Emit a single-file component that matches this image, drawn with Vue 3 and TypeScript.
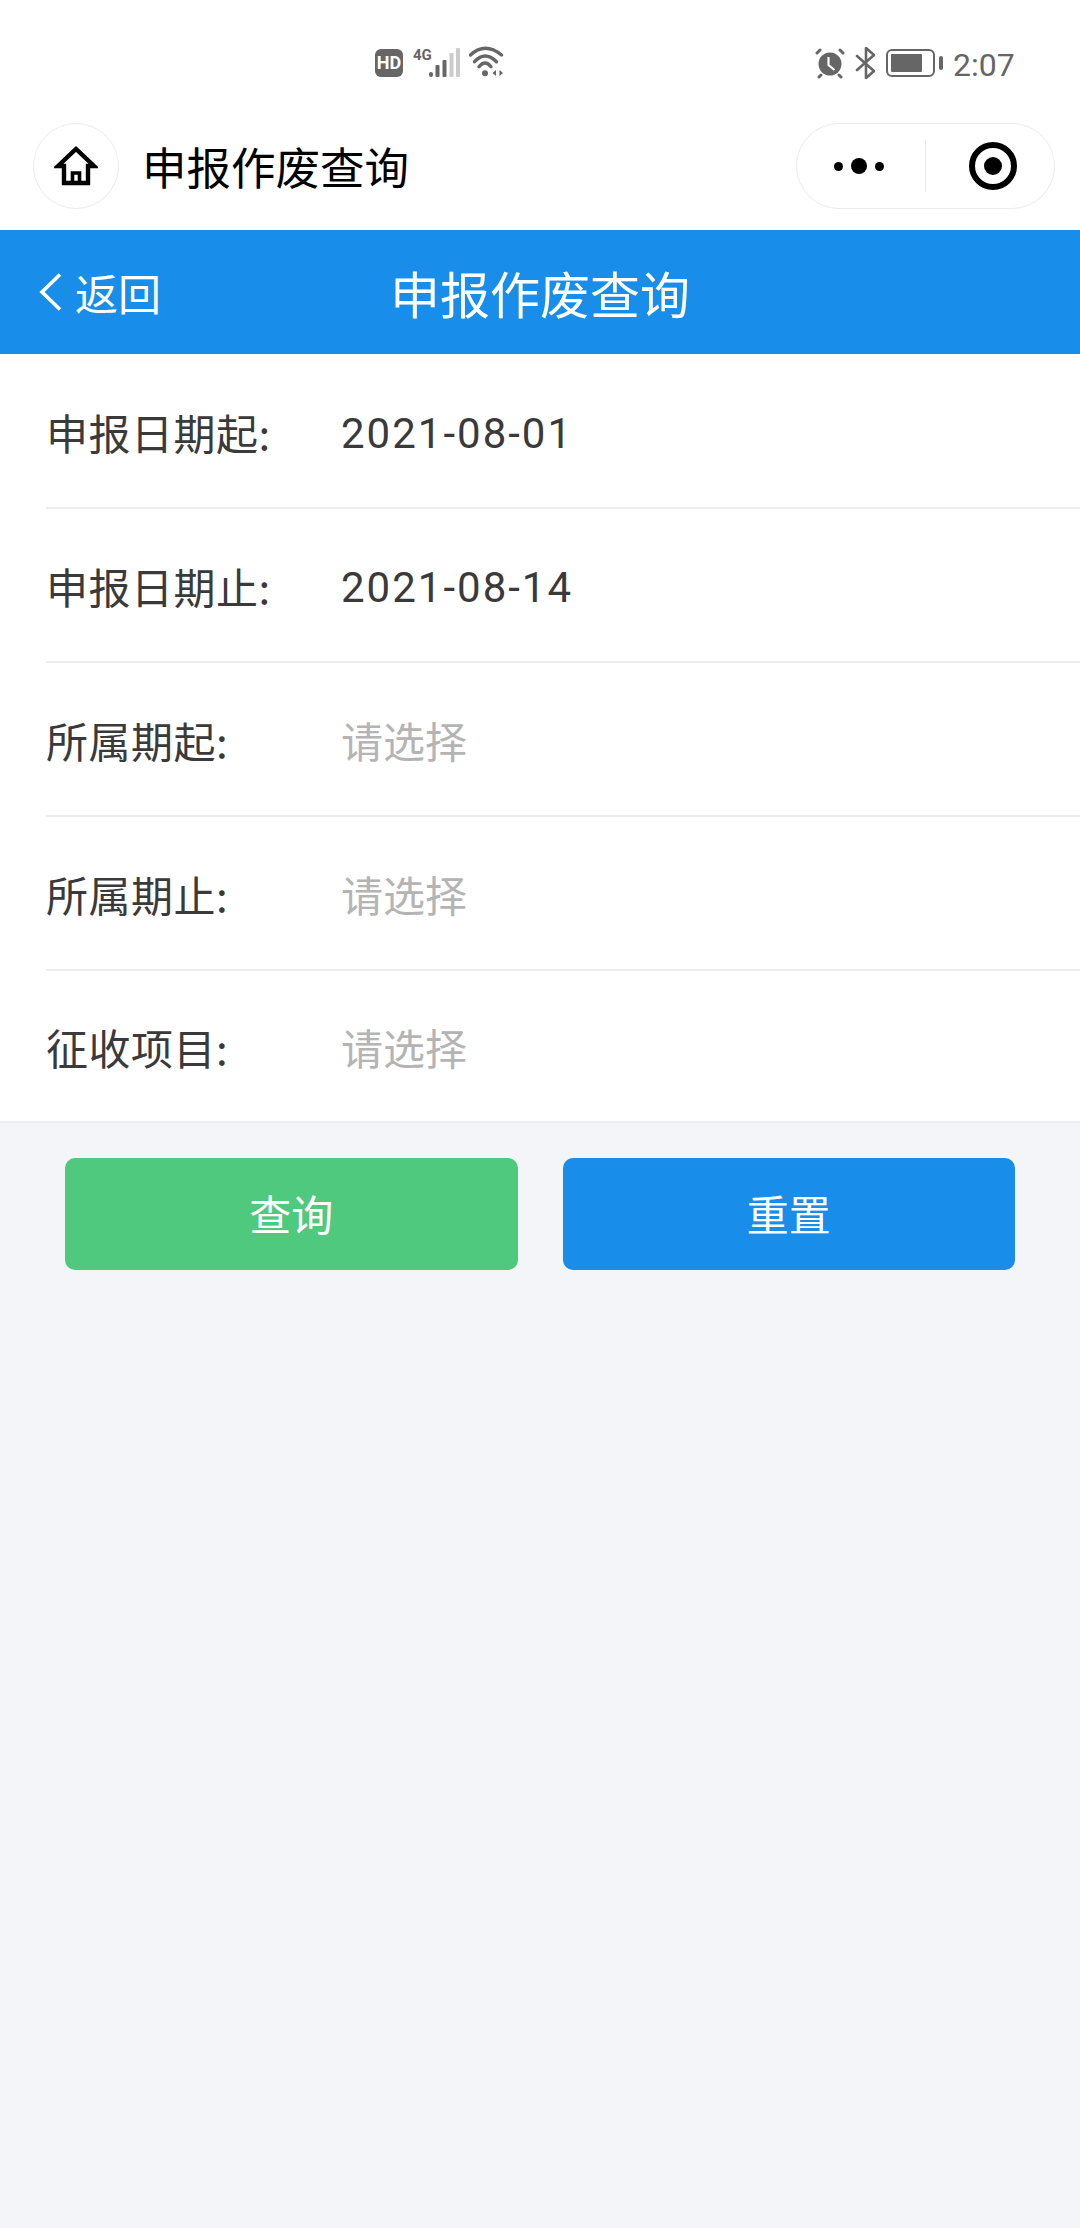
<script setup lang="ts">
interface Row { label: string; value: string; empty: boolean }
const rows: Row[] = [
  { label: '申报日期起:', value: '2021-08-01', empty: false },
  { label: '申报日期止:', value: '2021-08-14', empty: false },
  { label: '所属期起:', value: '请选择', empty: true },
  { label: '所属期止:', value: '请选择', empty: true },
  { label: '征收项目:', value: '请选择', empty: true },
]
</script>

<template>
  <div class="page">
    <div class="status">
      <div class="status-mid">
        <span class="hd">HD</span>
        <div class="signal">
          <span class="four-g">4G</span>
          <svg width="32" height="32" viewBox="0 0 32 32">
            <rect x="0" y="26" width="4" height="5" rx="2" fill="#666" />
            <rect x="6.500" y="19" width="4" height="12" rx="1" fill="#666" />
            <rect x="13.500" y="14" width="4" height="17" rx="1" fill="#666" />
            <rect x="20.500" y="7" width="4" height="24" rx="1" fill="#ccc" />
            <rect x="27" y="2" width="4" height="29" rx="1" fill="#ccc" />
          </svg>
        </div>
        <svg width="36" height="32" viewBox="0 0 36 32" fill="none" stroke="#666" stroke-width="3.400" stroke-linecap="round">
          <path d="M1.500 9Q16-4.400 32.500 9" />
          <path d="M5.500 15.700Q16 4.300 27.500 15.700" />
          <path d="M10 20.700Q16 13.300 22 20.700" />
          <circle cx="16" cy="27.300" r="3" fill="#666" stroke="none" />
          <path d="M23.500 27l3.500-3v6zM34 27l-3.500-3v6z" fill="#666" stroke="none" />
        </svg>
      </div>
      <div class="status-right">
        <svg width="32" height="32" viewBox="0 0 32 32">
          <circle cx="16" cy="17" r="11.500" fill="#666" />
          <path d="M14.500 10v8l6 5" fill="none" stroke="#fff" stroke-width="2.200" />
          <path d="M3 6l3-3M29 6l-3-3M7 28l-2 2M25 28l2 2" stroke="#666" stroke-width="3" stroke-linecap="round" />
        </svg>
        <svg width="22" height="32" viewBox="0 0 22 32" fill="none" stroke="#666" stroke-width="2.600" stroke-linejoin="round" stroke-linecap="round">
          <path d="M2 9l17 15-8 7V1l8 7L2 23" />
        </svg>
        <div class="battery">
          <span class="battery-body"><span class="battery-fill"></span></span>
          <span class="battery-tip"></span>
        </div>
        <span class="time">2:07</span>
      </div>
    </div>

    <div class="capsule-nav">
      <div class="home-btn">
        <svg width="44" height="44" viewBox="0 0 44 44" fill="none" stroke="#000" stroke-width="4.400" stroke-linejoin="miter">
          <path d="M4 22L22 5l18 17H34V39H10V22z" />
          <path d="M18.500 39V29h7v10" stroke-width="3.600" />
        </svg>
      </div>
      <div class="nav-title">申报作废查询</div>
      <div class="capsule">
        <div class="dots"><i class="dot"></i><i class="dot big"></i><i class="dot"></i></div>
        <span class="capsule-line"></span>
        <div class="target"><i></i></div>
      </div>
    </div>

    <div class="header">
      <div class="back">
        <svg width="24" height="38" viewBox="0 0 24 38" fill="none" stroke="#fff" stroke-width="3.600">
          <path d="M22 1.500L4 19l18 17.500" />
        </svg>
        <span>返回</span>
      </div>
      <div class="header-title">申报作废查询</div>
    </div>

    <div class="form">
      <div v-for="row in rows" :key="row.label" class="row">
        <div class="row-inner">
          <span class="label">{{ row.label }}</span>
          <span class="value" :class="{ empty: row.empty }">{{ row.value }}</span>
        </div>
      </div>
    </div>

    <div class="actions">
      <button class="btn green">查询</button>
      <button class="btn blue">重置</button>
    </div>
  </div>
</template>

<style>
html, body { margin: 0; background: #f3f5f9; }
</style>

<style scoped>
.page {
  width: 1080px;
  height: 2228px;
  background: #f3f5f9;
  font-family: "Noto Sans CJK SC", "Noto Sans", sans-serif;
  overflow: hidden;
}
.status {
  height: 100px;
  background: #fff;
  display: flex;
  position: relative;
  box-sizing: border-box;
  padding-top: 46px;
  color: #666;
}
.status-mid {
  margin-left: 375px;
  display: flex;
  align-items: flex-start;
  gap: 8px;
}
.hd {
  width: 28px;
  height: 28px;
  margin-top: 3px;
  border-radius: 6px;
  background: #666;
  color: #fff;
  font: 700 18px/28px "Roboto", sans-serif;
  text-align: center;
}
.signal { position: relative; width: 48px; height: 32px; display: flex; justify-content: flex-end; margin-left: 2px; }
.four-g { position: absolute; left: 0; top: 0; font: 700 15px/18px "Roboto", sans-serif; }
.status-right {
  position: absolute;
  left: 814px;
  top: 47px;
  display: flex;
  align-items: center;
  gap: 9px;
  height: 32px;
}
.battery { display: flex; align-items: center; gap: 4px; }
.battery-body {
  width: 49px;
  height: 28px;
  box-sizing: border-box;
  border: 2.500px solid #666;
  border-radius: 6px;
  padding: 3px;
  display: block;
}
.battery-fill { display: block; width: 31px; height: 100%; background: #666; border-radius: 1px; }
.battery-tip { width: 4px; height: 14px; background: #666; border-radius: 2px; }
.time { font: 400 32px/32px "Roboto", sans-serif; color: #666; padding-top: 3px; margin-left: 1px; }

.capsule-nav {
  height: 130px;
  background: #fff;
  display: flex;
  align-items: flex-start;
  box-sizing: border-box;
  padding: 23px 25px 0 33px;
}
.home-btn {
  width: 86px;
  height: 86px;
  box-sizing: border-box;
  border: 1.500px solid #ececec;
  border-radius: 50%;
  display: flex;
  align-items: center;
  justify-content: center;
}
.nav-title {
  margin-left: 23px;
  font-size: 44.500px;
  line-height: 86px;
  color: #000;
  flex: 1;
}
.capsule {
  width: 259px;
  height: 86px;
  box-sizing: border-box;
  border: 1.500px solid #ececec;
  border-radius: 43px;
  display: flex;
  align-items: center;
}
.dots { width: 127.500px; display: flex; align-items: center; justify-content: center; gap: 8px; padding-right: 4px; box-sizing: border-box; }
.dot { width: 9px; height: 9px; border-radius: 50%; background: #000; }
.dot.big { width: 16px; height: 16px; }
.capsule-line { width: 1px; height: 52px; background: #ececec; }
.target {
  width: 48px;
  height: 48px;
  box-sizing: border-box;
  border: 6px solid #000;
  border-radius: 50%;
  margin-left: 43px;
  display: flex;
  align-items: center;
  justify-content: center;
}
.target i { width: 18px; height: 18px; border-radius: 50%; background: #000; }

.header {
  height: 124px;
  background: #188eea;
  color: #fff;
  display: flex;
  align-items: center;
  position: relative;
}
.back {
  display: flex;
  align-items: center;
  gap: 13px;
  margin-left: 38px;
  font-size: 43px;
}
.header-title {
  position: absolute;
  left: 0;
  width: 1080px;
  text-align: center;
  font-size: 50px;
}
.form { background: #fff; padding-top: 1px; border-bottom: 2px solid #ebedf0; }
.row { height: 154px; padding-left: 46px; }
.row:last-child { height: 150px; }
.row-inner {
  height: 100%;
  box-sizing: border-box;
  border-bottom: 2px solid #ececec;
  display: flex;
  align-items: center;
}
.row:last-child .row-inner { border-bottom: 0; }
.label { width: 295px; font-size: 42px; color: #3a3a3a; flex: none; letter-spacing: 0.500px; }
.value { font-family: "Roboto", "Noto Sans CJK SC", sans-serif; font-size: 42px; color: #3a3a3a; letter-spacing: 2px; padding-top: 5px; }
.value.empty { color: #b4b4b4; letter-spacing: 0; padding-top: 0; }
.actions {
  display: flex;
  gap: 45px;
  padding: 35px 65px 0 65px;
}
.btn {
  width: 453px;
  height: 112px;
  border: 0;
  border-radius: 10px;
  color: #fff;
  font-family: inherit;
  font-size: 42px;
  padding: 0 0 4px;
}
.green { background: #4fc97d; }
.blue { background: #188eea; }
</style>
